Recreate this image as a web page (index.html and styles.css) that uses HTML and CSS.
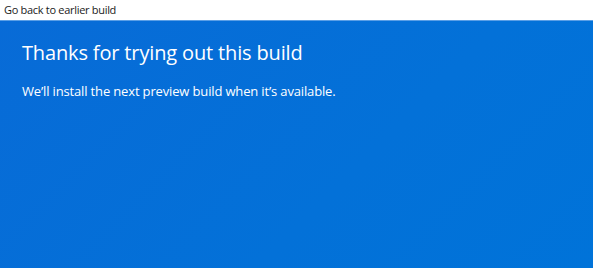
FILE: index.html
```html
<!DOCTYPE html>
<html lang="en">
<head>
<meta charset="utf-8">
<title>Go back to earlier build</title>
<link rel="stylesheet" href="styles.css">
</head>
<body>
<div class="window">
  <header class="titlebar">Go back to earlier build</header>
  <main class="content">
    <h1 class="heading">Thanks for trying out this build</h1>
    <p class="message">We’ll install the next preview build when it’s available.</p>
  </main>
</div>
</body>
</html>
```
FILE: styles.css
```css
html, body {
  margin: 0;
  padding: 0;
  height: 100%;
}
body {
  font-family: "Open Sans", "Noto Sans", sans-serif;
  background: #ffffff;
}
.window {
  display: flex;
  flex-direction: column;
  height: 100%;
}
.titlebar {
  height: 20px;
  box-sizing: border-box;
  padding: 2px 0 0 4px;
  font-size: 11px;
  line-height: 15px;
  letter-spacing: -0.3px;
  color: #1a1a1a;
  background: #ffffff;
}
.content {
  flex: 1;
  background: linear-gradient(135deg, #086bd7 0%, #0371d8 60%, #0073d9 100%);
  border-top: 1px solid #5b9fe6;
  padding: 19px 0 0 22px;
  color: #ffffff;
}
.heading {
  margin: 0;
  font-size: 20px;
  font-weight: 400;
  line-height: 26px;
  letter-spacing: -0.15px;
}
.message {
  margin: 16px 0 0;
  font-size: 13px;
  line-height: 18px;
  letter-spacing: -0.15px;
}
```
